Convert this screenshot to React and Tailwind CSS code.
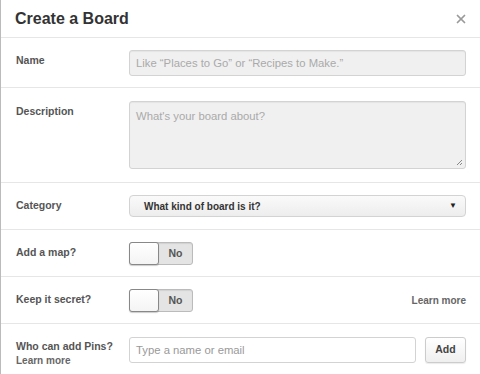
import { X } from "lucide-react"

const Row = ({ label, children, className = "" }) => (
  <div className={`flex border-b border-[#e6e6e6] pl-[15px] pr-[14px] ${className}`}>
    <div className="w-[113px] shrink-0">{label}</div>
    <div className="flex-1">{children}</div>
  </div>
)

const Label = ({ children }) => (
  <div className="text-[10.5px] font-bold text-[#555] leading-[14px] pt-[3px]">{children}</div>
)

const Toggle = () => (
  <div className="flex h-[23px] w-[64px] rounded-[3px] border border-[#bbb] bg-[#e4e4e4] shadow-[inset_0_1px_1px_rgba(0,0,0,0.08)]">
    <div className="w-[30px] -ml-px -my-px rounded-[3px] border border-[#888] bg-gradient-to-b from-white to-[#f4f4f4] shadow-[0_1px_1px_rgba(0,0,0,0.2)]" />
    <div className="flex-1 flex items-center justify-center text-[10.5px] font-bold text-[#555]">No</div>
  </div>
)

export default function App() {
  return (
    <div className="w-[480px] h-[374px] overflow-hidden bg-white border-l border-[#bbb] font-['Liberation_Sans',Arial,sans-serif]">
      <div className="flex items-center justify-between h-[38px] border-b border-[#e6e6e6] pl-[14px] pr-[12px]">
        <h1 className="text-[16px] font-bold text-[#333]">Create a Board</h1>
        <X size={14} strokeWidth={3} className="text-[#9a9a9a] mt-[1px]" />
      </div>

      <Row label={<Label>Name</Label>} className="pt-[12px] pb-[11px]">
        <div className="h-[26px] rounded-[3px] border border-[#d3d3d3] bg-[#f0f0f0] px-[6px] flex items-center text-[11.3px] text-[#aaa] shadow-[inset_0_1px_1px_rgba(0,0,0,0.05)]">
          Like “Places to Go” or “Recipes to Make.”
        </div>
      </Row>

      <Row label={<Label>Description</Label>} className="pt-[13px] pb-[13px]">
        <div className="relative h-[68px] rounded-[3px] border border-[#d3d3d3] bg-[#f0f0f0] px-[6px] pt-[6px] text-[11.3px] text-[#aaa] shadow-[inset_0_1px_1px_rgba(0,0,0,0.05)]">
          What's your board about?
          <svg className="absolute right-[2px] bottom-[2px]" width="7" height="7" viewBox="0 0 7 7">
            <path d="M6 1L1 6M6 4L4 6" stroke="#888" strokeWidth="1" />
          </svg>
        </div>
      </Row>

      <Row label={<Label>Category</Label>} className="pt-[12px] pb-[12px]">
        <div className="h-[22px] rounded-[4px] border border-[#d3d3d3] bg-gradient-to-b from-[#fafafa] to-[#ededed] pl-[14px] pr-[8px] flex items-center justify-between text-[10px] font-bold text-[#333]">
          <span>What kind of board is it?</span>
          <span className="text-[8px] text-[#222]">▼</span>
        </div>
      </Row>

      <Row label={<Label>Add a map?</Label>} className="pt-[12px] pb-[11px]">
        <Toggle />
      </Row>

      <Row label={<Label>Keep it secret?</Label>} className="pt-[12px] pb-[11px]">
        <div className="flex items-center justify-between">
          <Toggle />
          <span className="text-[10px] font-bold text-[#666]">Learn more</span>
        </div>
      </Row>

      <Row
        label={
          <div className="-mt-px">
            <Label>Who can add Pins?</Label>
            <div className="text-[10px] font-bold text-[#666] leading-[14px] mt-px">Learn more</div>
          </div>
        }
        className="pt-[13px] pb-[12px] border-b-0"
      >
        <div className="flex gap-[9px]">
          <div className="flex-1 h-[26px] rounded-[3px] border border-[#d3d3d3] bg-white px-[6px] flex items-center text-[11.3px] text-[#999]">
            Type a name or email
          </div>
          <div className="w-[41px] h-[26px] rounded-[3px] border border-[#ccc] bg-gradient-to-b from-white to-[#efefef] flex items-center justify-center text-[10.5px] font-bold text-[#444] shadow-[0_1px_1px_rgba(0,0,0,0.08)]">
            Add
          </div>
        </div>
      </Row>
    </div>
  )
}
